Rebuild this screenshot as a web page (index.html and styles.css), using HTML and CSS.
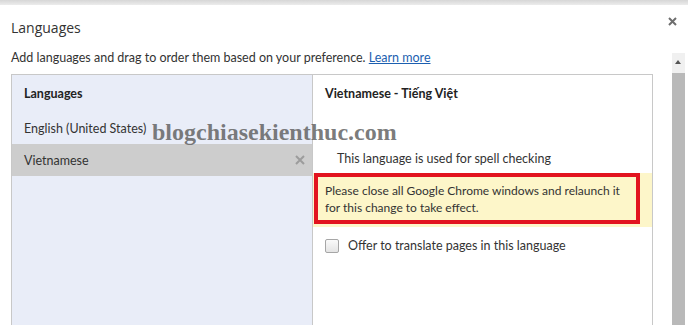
FILE: index.html
```html
<!DOCTYPE html>
<html lang="en">
<head>
    <meta charset="UTF-8">
    <title>Languages</title>
    <link rel="stylesheet" href="styles.css">
</head>
<body>
<div class="topbar"></div>
<div class="dialog">
    <div class="title-row">
        <h1 class="title">Languages</h1>
        <svg class="close" width="9" height="9" viewBox="0 0 9 9"><path d="M1 1L8 8M8 1L1 8"/></svg>
    </div>
    <div class="body">
        <div class="content">
            <p class="intro">Add languages and drag to order them based on your preference. <a href="#">Learn more</a></p>
            <div class="panel">
                <div class="list">
                    <div class="list-head">Languages</div>
                    <div class="list-item">English (United States)</div>
                    <div class="list-item selected">Vietnamese
                        <svg class="remove" width="10" height="10" viewBox="0 0 10 10"><path d="M1 1L9 9M9 1L1 9"/></svg>
                    </div>
                </div>
                <div class="detail">
                    <div class="detail-head">Vietnamese - Tiếng Việt</div>
                    <div class="spell">This language is used for spell checking</div>
                    <div class="notice">
                        <div class="notice-box">Please close all Google Chrome windows and relaunch it for this change to take effect.</div>
                    </div>
                    <label class="translate"><span class="check"></span>Offer to translate pages in this language</label>
                </div>
            </div>
        </div>
        <div class="scrollbar">
            <div class="arrow"></div>
            <div class="thumb"></div>
        </div>
    </div>
    <div class="watermark">blogchiasekienthuc.com</div>
</div>
</body>
</html>
```

FILE: styles.css
```css
body {
    margin: 0;
    font-family: Lato, "Open Sans", sans-serif;
    font-size: 12.5px;
    color: #333;
    background: #fff;
    overflow: hidden;
}

.topbar {
    height: 5px;
    background: linear-gradient(#d6d6d6, #ececec);
}

.dialog {
    position: relative;
    padding: 0 3px 0 11px;
}

.title-row {
    display: flex;
    justify-content: space-between;
    align-items: center;
    height: 40px;
}

.title {
    margin: 0;
    padding-top: 4px;
    font-family: "Open Sans", sans-serif;
    font-size: 14px;
    font-weight: normal;
    color: #333;
}

.close {
    margin-right: 8px;
    margin-top: -7px;
    stroke: #6e6e6e;
    stroke-width: 2;
}

.body {
    display: flex;
    gap: 19px;
}

.content {
    flex: 1;
}

.intro {
    margin: 4px 0 8px;
    line-height: 17px;
    color: #333;
}

.intro a {
    color: #1c5fb0;
}

.panel {
    display: flex;
    height: 260px;
    border: 1px solid #c8c8c8;
    border-bottom: none;
}

.list {
    width: 300px;
    background: #e9edf8;
    border-right: 1px solid #c8c8c8;
}

.list-head {
    padding: 11px 12px 0;
    height: 26px;
    font-weight: bold;
    color: #222;
}

.list-item {
    display: flex;
    justify-content: space-between;
    align-items: center;
    height: 32px;
    padding: 0 7px 0 12px;
}

.list-item.selected {
    background: #cdcdcd;
}

.remove {
    stroke: #9c9c9c;
    stroke-width: 2;
}

.detail {
    flex: 1;
}

.detail-head {
    padding: 11px 12px 0;
    height: 65px;
    font-weight: bold;
    color: #222;
}

.spell {
    padding-left: 24px;
    height: 22px;
}

.notice {
    background: #fdf6c9;
    padding: 0 12px 3px 1px;
}

.notice-box {
    border: 4px solid #e2141f;
    padding: 5px 3px 4px 7px;
    font-size: 12px;
    line-height: 17px;
    color: #333;
}

.translate {
    display: flex;
    align-items: center;
    gap: 9px;
    padding: 11px 12px 0;
}

.check {
    width: 12px;
    height: 12px;
    border: 1px solid #a6a6a6;
    border-radius: 2px;
    background: linear-gradient(#fafafa, #e4e4e4);
}

.scrollbar {
    width: 13px;
    margin-top: 8px;
    display: flex;
    flex-direction: column;
}

.arrow {
    height: 20px;
    background: #f0f0f0;
    position: relative;
}

.arrow::after {
    content: "";
    position: absolute;
    left: 3px;
    top: 7px;
    border-left: 3px solid transparent;
    border-right: 3px solid transparent;
    border-bottom: 4px solid #555;
}

.thumb {
    flex: 1;
    background: #b9b9b9;
    min-height: 260px;
}

.watermark {
    position: absolute;
    left: 152px;
    top: 114px;
    font-family: "Liberation Serif", serif;
    font-weight: bold;
    font-size: 24px;
    color: rgba(100, 100, 100, 0.85);
}
```
